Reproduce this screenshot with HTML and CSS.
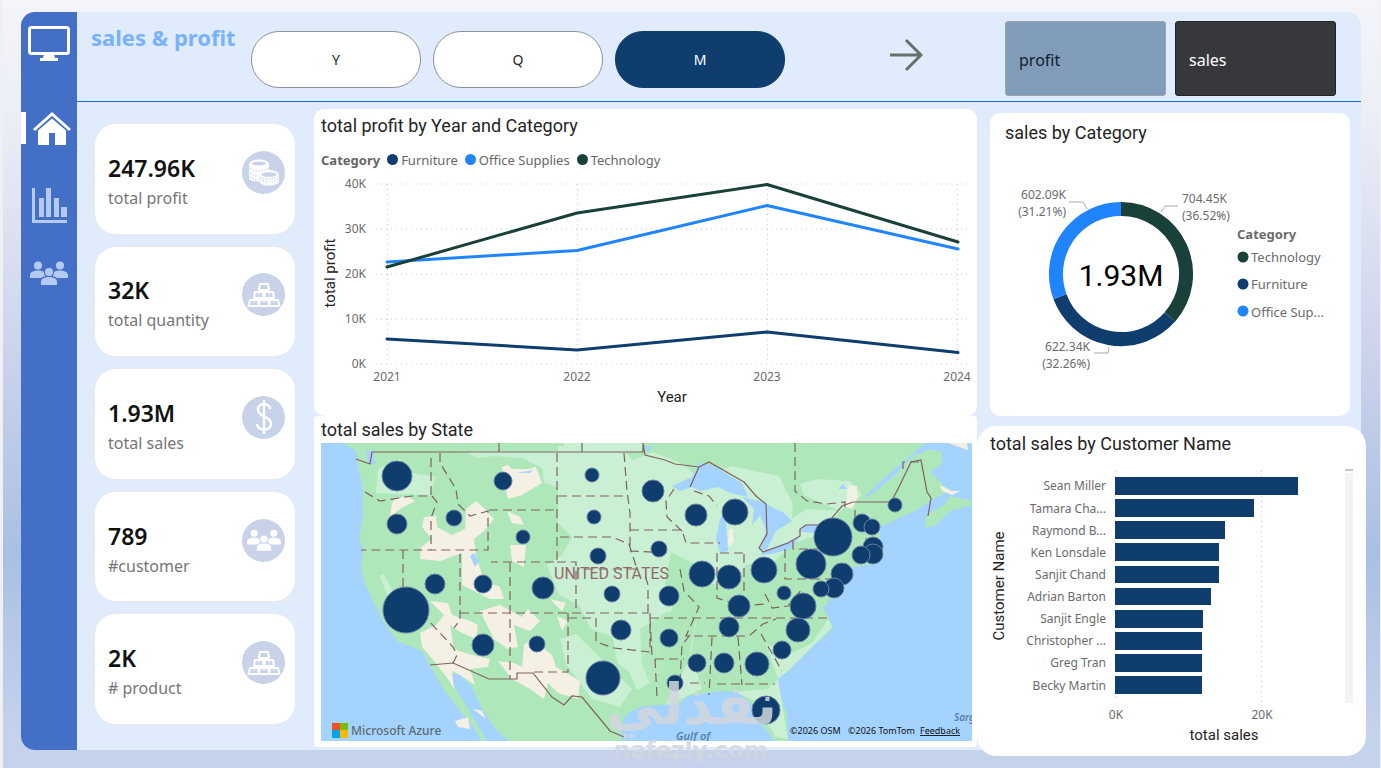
FILE: index.html
```html
<!DOCTYPE html>
<html lang="en">
<head>
    <meta charset="UTF-8">
    <meta name="viewport" content="width=device-width, initial-scale=1.0">
    <title>sales &amp; profit</title>
    <link rel="stylesheet" href="styles.css">
</head>
<body>

<!-- Shared icons -->
<svg class="sprite" aria-hidden="true">
    <symbol id="icon-people" viewBox="0 0 38 24">
        <circle cx="8" cy="4.500" r="4"/>
        <circle cx="30" cy="4.500" r="4"/>
        <circle cx="19" cy="11" r="4"/>
        <path d="M0 17v-3c0-3 4-4.500 8-4.500 2.500 0 4.500.5 6 1.500 0 2 .5 3 1.500 4-2 .5-3 1-4 2z"/>
        <path d="M38 17v-3c0-3-4-4.500-8-4.500-2.500 0-4.500.5-6 1.500 0 2-.5 3-1.500 4 2 .5 3 1 4 2z"/>
        <path d="M11 24v-3.500c0-3 4-4.500 8-4.500s8 1.500 8 4.500V24z"/>
    </symbol>
    <symbol id="icon-boxes" viewBox="0 0 34 26">
        <g fill="none" stroke="currentColor" stroke-width="2">
            <path d="M13 2h8l1 6h-10z"/>
            <path d="M8 10h8l1 6H7zM18 10h8l1 6H17z"/>
            <path d="M3 18h8l1 6H1.500zM13 18h8l1 6H12zM23 18h8l1.500 6H22z"/>
            <path d="M12 10v3M22 10v3M7 18v3M17 18v3M27 18v3" stroke-width="1"/>
        </g>
    </symbol>
    <symbol id="icon-coins" viewBox="0 0 32 27">
        <path d="M1 5c0-2.500 5-4.500 10-4.500s10 2 10 4.500v6h-2c5 0 12 1 12 5v6c0 2.500-4 4.500-10 4.500-5 0-9-1.500-10-4C4 22.500 1 21 1 19z"/>
        <ellipse cx="11" cy="4.500" rx="7" ry="2" fill="#c8d3ea"/>
        <ellipse cx="21" cy="15.500" rx="7.500" ry="2.300" fill="#c8d3ea"/>
        <path d="M2 9c4 4 14 4 18 0M2 14c2 2 5 3 9 3M2 18c3 2 5 3 9 3M12 20c4 4 14 4 18 0M12 18c4 3 14 3 18-1" fill="none" stroke="#c8d3ea" stroke-width="1.200" stroke-dasharray="1.500 1.500"/>
    </symbol>
    <symbol id="icon-dollar" viewBox="0 0 18 34">
        <path d="M15 9c0-3-2.500-5-6-5S3 6 3 9.500 6 15 9 16.500s7 3 7 7-3 6-7 6-7-2-7-5.500M9 0v34" fill="none" stroke="currentColor" stroke-width="2.400"/>
    </symbol>
</svg>

<div class="dashboard">
    <nav class="sidebar" aria-label="Pages">
        <a href="#" class="nav-link" aria-label="Screen">
            <svg width="42" height="36" viewBox="0 0 42 36"><rect x="1.500" y="1.500" width="39" height="26" rx="2" fill="none" stroke="#fff" stroke-width="3"/><path d="M16 28h10l1 4h3v3H12v-3h3z" fill="#fff"/></svg>
        </a>
        <a href="#" class="nav-link active" aria-label="Home">
            <svg width="38" height="33" viewBox="0 0 38 33"><path d="M1 18 19 2l18 16" fill="none" stroke="#fff" stroke-width="3"/><path d="M5 18.500 19 6.500l14 12V33H22V21h-6v12H5z" fill="#fff"/></svg>
        </a>
        <a href="#" class="nav-link" aria-label="Charts">
            <svg width="35" height="35" viewBox="0 0 35 35" fill="#b5caf0"><path d="M0 0h3v32h32v3H0z"/><path d="M7 10h5v19H7zM14 0h5v29h-5zM22 10h5v19h-5zM29 19h6v10h-6z"/></svg>
        </a>
        <a href="#" class="nav-link" aria-label="Customers">
            <svg width="38" height="24" class="people"><use href="#icon-people"/></svg>
        </a>
    </nav>

    <main class="main">
        <header class="header">
            <h1>sales &amp; profit</h1>
            <div class="periods">
                <button class="period">Y</button>
                <button class="period">Q</button>
                <button class="period selected">M</button>
            </div>
            <button class="arrow" aria-label="Next">
                <svg width="34" height="34" viewBox="0 0 34 34"><path d="M1 17h31M17 2l15 15-15 15" fill="none" stroke="#66706a" stroke-width="3"/></svg>
            </button>
            <div class="measures">
                <button class="measure">profit</button>
                <button class="measure selected">sales</button>
            </div>
        </header>

        <div class="content">
            <section class="kpis">
                <article class="kpi">
                    <div><strong>247.96K</strong><span>total profit</span></div>
                    <i class="badge"><svg width="32" height="27"><use href="#icon-coins"/></svg></i>
                </article>
                <article class="kpi">
                    <div><strong>32K</strong><span>total quantity</span></div>
                    <i class="badge"><svg width="34" height="26"><use href="#icon-boxes"/></svg></i>
                </article>
                <article class="kpi">
                    <div><strong>1.93M</strong><span>total sales</span></div>
                    <i class="badge"><svg width="18" height="34"><use href="#icon-dollar"/></svg></i>
                </article>
                <article class="kpi">
                    <div><strong>789</strong><span>#customer</span></div>
                    <i class="badge"><svg width="34" height="22"><use href="#icon-people"/></svg></i>
                </article>
                <article class="kpi">
                    <div><strong>2K</strong><span># product</span></div>
                    <i class="badge"><svg width="34" height="26"><use href="#icon-boxes"/></svg></i>
                </article>
            </section>

            <div class="column">
                <section class="card profit-card">
                    <h2>total profit by Year and Category</h2>
                    <ul class="legend">
                        <li class="legend-title">Category</li>
                        <li class="furniture">Furniture</li>
                        <li class="office">Office Supplies</li>
                        <li class="technology">Technology</li>
                    </ul>
                    <svg class="chart" viewBox="321 172 651 238">
                        <g class="grid">
                            <path d="M376 184h594M376 229h594M376 274h594M376 319h594M376 364h594"/>
                            <path d="M387.500 184v180M577.500 184v180M767.500 184v180M957.500 184v180"/>
                        </g>
                        <g class="line">
                            <path d="M387 339 577 350 767 332 958 352.500" stroke="#0f3d6e"/>
                            <path d="M387 262 577 250.500 767 205.500 958 249" stroke="#2184ff"/>
                            <path d="M387 267 577 213 767 184.500 958 242" stroke="#1a4139"/>
                        </g>
                        <g class="tick end">
                            <text x="366" y="188">40K</text>
                            <text x="366" y="233">30K</text>
                            <text x="366" y="278">20K</text>
                            <text x="366" y="323">10K</text>
                            <text x="366" y="368">0K</text>
                        </g>
                        <g class="tick middle">
                            <text x="387" y="381">2021</text>
                            <text x="577" y="381">2022</text>
                            <text x="767" y="381">2023</text>
                            <text x="957" y="381">2024</text>
                        </g>
                        <text class="axis" x="672" y="402">Year</text>
                        <text class="axis" transform="translate(335 273) rotate(-90)">total profit</text>
                    </svg>
                </section>

                <section class="card map-card">
                    <h2>total sales by State</h2>
                    <svg class="chart" viewBox="321 444 651 298">
                        <rect x="321" y="444" width="651" height="298" fill="#a5d3ff"/>
                        <!-- land -->
                        <path fill="#aee7ba" d="M343 444 357 453 358 468 363 490 363 518 359 538 363 553 361 568 365 585 373 602 383 622 398 643 410 647 423 653 430 667 442 688 457 708 472 725 482 743 486 740 477 725 467 708 453 685 452 675 460 675 472 688 482 710 497 732 510 743H623L620 727 627 715 640 708 657 706 680 705 687 697 720 692 737 693 750 703 760 723 775 743H788L787 715 777 688 778 678 787 670 807 650 825 638 833 628 828 618 823 608 837 598 845 582 853 568 873 565 885 555 880 542 880 528 897 520 915 512 933 500 948 493 938 480 930 473 942 465 942 453 930 450 913 457 896 475 872 495 862 500 885 478 907 460 925 444z"/>
                        <path fill="#aee7ba" d="M972 502 950 497 945 505 926 516 925 529 936 526 950 512 972 506z"/>
                        <!-- light plains -->
                        <g fill="#c9f0d3">
                            <path d="M454 454H640l4-10h-80v8h-90zM468 454h90v70l14 14-10 18-15 10 12 30 20 10 12 24 22 8 4 25 12 10 8 18 15-8 12-16-5-28 14-32-8-22 6-32 24 12 14 20 22 0 16-20h24l18-16 4-44-14-28-48-10-10 4-14 16-24-22-30-12-20 8-14-14H558v42l-14-6-2-14-20-10-28-2-16 2z"/>
                            <path d="M378 470 400 460 412 474 436 478 430 496 376 494z"/>
                            <path d="M738 498 756 505 762 530 758 552 724 552 726 520zM764 548 788 522 806 510 840 512 822 535 790 545z"/>
                            <path d="M800 485 816 480 850 482 862 496 840 512 804 496zM665 706 690 660 698 612 690 652 702 690 672 704zM735 693 768 690 778 680 766 645 790 655 812 644 828 620 832 628 808 652 788 672 778 680 782 705 788 740 776 738 765 720 755 702z"/>
                            <path d="M380 577 384 575 402 610 396 620zM576 635 560 640 566 665 592 700 620 708 632 690z"/>
                        </g>
                        <path fill="#aee7ba" d="M640 630 668 612 690 622 686 650 670 680 652 690 642 665z" opacity=".8"/>
                        <!-- desert and mountains -->
                        <g fill="#f5f0e4">
                            <path d="M395 500 407 497 415 502 400 510 390 518 392 504zM424 518 436 517 437 528 452 536 465 530 466 510 476 502 485 510 494 520 484 532 474 540 476 556 484 582 500 588 504 600 490 600 474 592 462 586 462 554 440 562 420 560 421 548 432 540 422 528z"/>
                            <path d="M430 602 448 604 452 616 470 622 478 626 476 640 462 634 450 626 454 650 468 655 490 660 488 668 470 670 475 686 460 676 452 672 454 690 448 680 434 662 422 648 420 634 436 626 444 616z"/>
                            <path d="M480 612 500 606 522 618 528 610 540 622 530 632 514 626 518 648 508 650 494 640z"/>
                            <path d="M498 662 514 664 522 668 524 646 532 640 552 656 556 668 580 682 578 700 558 694 548 684 544 700 530 690 512 680zM504 484 502 468 508 466 512 470 528 470 536 468 542 484 522 496 508 500zM507 512 520 518 524 526 512 524zM510 546 526 546 524 568 512 562zM550 600 566 604 562 612zM557 617 568 622 562 632zM473 710 486 720 482 712zM455 722 468 718 470 730 458 728zM848 486 857 487 857 500 852 510 846 508zM729 530 733 530 734 542 730 548 728 544zM948 444 967 444 968 451z"/>
                            <path d="M940 486 952 492 960 492 952 496 942 492z"/>
                        </g>
                        <!-- lakes -->
                        <g fill="#a5d3ff">
                            <path d="M672 487 692 478 700 464 712 466 742 484 748 498 730 494 718 488 700 492 692 488 680 492zM720 520 726 512 732 505 740 500 732 508 726 524 728 552 720 554 716 540z"/>
                            <path d="M742 498 760 502 784 514 792 522 776 532 766 552 760 550 766 532 760 516 752 526 754 510zM759 556 766 551 782 545 800 538 790 550 772 555zM798 532 804 526 830 524 830 530 812 534zM470 557 474 554 479 562 475 568zM366 452 372 452 376 466 368 464zM644 446 652 448 648 454zM516 474 534 471 530 474zM838 490 843 485 847 490z"/>
                            <path d="M828 598 832 604 832 612 828 606z"/>
                        </g>
                        <!-- borders -->
                        <g fill="none" stroke="#80605f" stroke-width="1.200">
                            <path d="M356 460 370 465 372 453H643V444l2 12 20 5 10 4 24 3 10-5 35 20 12 14 10 8 1 30-8 14 4 4 25-9 12-7 0-7 6-4h20l16-19 11-4h38l6-11 14-29 10-2 6 32 4 6-3 18"/>
                            <path d="M430 666 453 664 489 680H517v-6h16l19 24 12 8 8-9 10 1 28 34 14 6M699 468 690 488M855 511v18M865 540h12"/>
                            <g stroke-dasharray="9 5">
                                <path d="M365 493 380 502 412 497h19V454M440 454v10l16 26 2 15 12 12 18-5v39H361M432 497l5 6-6 16v32M403 551v43l50 54 4 8-4 8M489 511h68M557 454v109H491M460 555v66l-6 8M510 564v116M460 614H648M557 563h19v50M558 497h70M560 538h52l17 7 8 25h-60M499 444v9M582 444v9M624 454l3 38 3 22v38l38 2"/>
                                <path d="M568 614v59H533M568 619h28v24l18 6 36 4V614M648 614v-28l-4-13M650 619h178M650 619l2 38M655 660h29M690 636l-8 10-2 36M630 531h52l4 13h34M674 490l-8 12 1 16 15 14M720 554h25M717 554v45l24 8 24-2M744 555v37M680 570l4 22 15 16-13 29h63l14-12 13-5M712 638l-3 58M738 638l4 48M717 685h58M761 635l21 37M785 550v30h52M793 542v8h40"/>
                                <path d="M765 595l7 14 16-2 14-17M795 444v48l12 10 20 3 18-2v10M655 660l2 38M690 684h15M694 492l15 5 8 10M903 470v-7h17"/>
                            </g>
                        </g>
                        <text class="country" x="554" y="580">UNITED STATES</text>
                        <text class="sea" x="676" y="741">Gulf of</text>
                        <text class="sea small" x="954" y="722">Sarg</text>
                        <!-- sales by state -->
                        <g class="bubbles">
                            <circle cx="397" cy="477" r="15"/><circle cx="397" cy="525" r="10"/><circle cx="454" cy="519" r="8"/><circle cx="503" cy="482" r="9"/><circle cx="592" cy="476" r="7"/><circle cx="594" cy="518" r="7"/><circle cx="598" cy="557" r="8"/><circle cx="523" cy="538" r="7"/><circle cx="435" cy="585" r="10"/><circle cx="483" cy="585" r="9"/><circle cx="406" cy="611" r="23"/><circle cx="543" cy="589" r="11"/><circle cx="612" cy="595" r="8"/><circle cx="483" cy="646" r="11"/><circle cx="537" cy="645" r="8"/><circle cx="621" cy="631" r="10"/><circle cx="603" cy="679" r="17"/>
                            <circle cx="653" cy="492" r="11"/><circle cx="696" cy="516" r="11"/><circle cx="735" cy="513" r="13"/><circle cx="659" cy="550" r="8"/><circle cx="702" cy="575" r="13"/><circle cx="729" cy="578" r="12"/><circle cx="764" cy="571" r="13"/><circle cx="784" cy="594" r="7"/><circle cx="669" cy="597" r="10"/><circle cx="739" cy="607" r="11"/><circle cx="729" cy="628" r="10"/><circle cx="803" cy="607" r="13"/><circle cx="798" cy="631" r="12"/><circle cx="782" cy="651" r="9"/><circle cx="757" cy="665" r="12"/><circle cx="724" cy="664" r="10"/><circle cx="697" cy="664" r="9"/><circle cx="669" cy="639" r="9"/><circle cx="675" cy="684" r="8"/><circle cx="766" cy="711" r="14"/>
                            <circle cx="833" cy="538" r="19"/><circle cx="811" cy="565" r="15"/><circle cx="842" cy="575" r="11"/><circle cx="834" cy="589" r="10"/><circle cx="821" cy="590" r="8"/><circle cx="862" cy="524" r="9"/><circle cx="872" cy="528" r="8"/><circle cx="873" cy="548" r="10"/><circle cx="873" cy="555" r="10"/><circle cx="861" cy="556" r="9"/><circle cx="895" cy="506" r="7"/>
                        </g>
                        <rect x="332" y="724" width="8" height="7" fill="#f25022"/><rect x="340" y="724" width="8" height="7" fill="#7fba00"/><rect x="332" y="731" width="8" height="8" fill="#00a4ef"/><rect x="340" y="731" width="8" height="8" fill="#ffb900"/>
                        <text class="azure" x="351" y="736">Microsoft Azure</text>
                        <text class="copyright" x="790" y="735">©2026 OSM</text>
                        <text class="copyright" x="848" y="735">©2026 TomTom</text>
                        <a href="#"><text class="copyright link" x="920" y="735">Feedback</text></a>
                    </svg>
                    <div class="watermark"><span lang="ar">نفذلي</span><span>nafezly.com</span></div>
                </section>
            </div>

            <div class="column side">
                <section class="card donut-card">
                    <h2>sales by Category</h2>
                    <svg class="chart" viewBox="990 146 360 246">
                        <g fill="none" stroke-width="14">
                            <path stroke="#1a4139" d="M1121 209A65 65 0 0 1 1169.800 317"/>
                            <path stroke="#0f3d6e" d="M1169.800 317A65 65 0 0 1 1060 296.600"/>
                            <path stroke="#2184ff" d="M1060 296.600A65 65 0 0 1 1121 209"/>
                        </g>
                        <path d="M1069 202h14l4 7M1178 206h-13l-4 6M1094 353h14l1-6" fill="none" stroke="#aaa"/>
                        <text class="total" x="1121" y="286">1.93M</text>
                        <g class="tick end">
                            <text x="1066" y="199">602.09K</text>
                            <text x="1066" y="216">(31.21%)</text>
                            <text x="1090" y="351">622.34K</text>
                            <text x="1090" y="368">(32.26%)</text>
                        </g>
                        <g class="tick">
                            <text x="1182" y="203">704.45K</text>
                            <text x="1182" y="220">(36.52%)</text>
                        </g>
                        <circle cx="1243" cy="257" r="5.500" fill="#1a4139"/>
                        <circle cx="1243" cy="284" r="5.500" fill="#0f3d6e"/>
                        <circle cx="1243" cy="311" r="5.500" fill="#2184ff"/>
                        <g class="key">
                            <text class="key-title" x="1237" y="239">Category</text>
                            <text x="1251" y="262">Technology</text>
                            <text x="1251" y="289">Furniture</text>
                            <text x="1251" y="317">Office Sup...</text>
                        </g>
                    </svg>
                </section>

                <section class="card customer-card">
                    <h2>total sales by Customer Name</h2>
                    <svg class="chart" viewBox="977 458 389 292">
                        <path class="grid" d="M1115.500 472v228M1261.500 472v232"/>
                        <g fill="#0f3d6e">
                            <rect x="1115" y="478" width="183" height="18"/>
                            <rect x="1115" y="500" width="139" height="18"/>
                            <rect x="1115" y="522" width="110" height="18"/>
                            <rect x="1115" y="544" width="104" height="18"/>
                            <rect x="1115" y="567" width="104" height="17"/>
                            <rect x="1115" y="589" width="96" height="17"/>
                            <rect x="1115" y="611" width="88" height="18"/>
                            <rect x="1115" y="633" width="87" height="18"/>
                            <rect x="1115" y="655" width="87" height="18"/>
                            <rect x="1115" y="677" width="87" height="18"/>
                        </g>
                        <g class="tick end">
                            <text x="1106" y="491">Sean Miller</text>
                            <text x="1106" y="514">Tamara Cha...</text>
                            <text x="1106" y="536">Raymond B...</text>
                            <text x="1106" y="558">Ken Lonsdale</text>
                            <text x="1106" y="580">Sanjit Chand</text>
                            <text x="1106" y="602">Adrian Barton</text>
                            <text x="1106" y="624">Sanjit Engle</text>
                            <text x="1106" y="646">Christopher ...</text>
                            <text x="1106" y="668">Greg Tran</text>
                            <text x="1106" y="691">Becky Martin</text>
                        </g>
                        <g class="tick middle">
                            <text x="1116" y="720">0K</text>
                            <text x="1262" y="720">20K</text>
                        </g>
                        <text class="axis" x="1224" y="741">total sales</text>
                        <text class="axis" transform="translate(1004 587) rotate(-90)">Customer Name</text>
                        <rect x="1345" y="474" width="8" height="230" fill="#f3f3f3"/>
                        <rect x="1345" y="470" width="8" height="2" fill="#c4c4c4"/>
                    </svg>
                </section>
            </div>
        </div>
    </main>
</div>

</body>
</html>
```
FILE: styles.css
```css
* {
    box-sizing: border-box;
}
body {
    margin: 0;
    min-height: 100vh;
    padding: 12px 19px 18px 18px;
    display: flex;
    border: solid #f0f0f4;
    border-width: 0 1px 0 3px;
    font-family: "Noto Sans", "Open Sans", sans-serif;
    color: #252423;
    background: linear-gradient(#f4f5fa 0, #eceef7 15%, #cdd4ec 45%, #a9c0e2 72%, #c5d2ec 96%);
}
h1, h2, ul {
    margin: 0;
    padding: 0;
}
button {
    font: inherit;
    cursor: pointer;
}
.sprite {
    position: absolute;
    width: 0;
    height: 0;
}

/* Layout */
.dashboard {
    flex: 1;
    display: flex;
    border-radius: 14px;
    background: #e0ecfc;
}
.sidebar {
    width: 56px;
    padding-top: 14px;
    display: flex;
    flex-direction: column;
    background: #4370c6;
    border-radius: 14px 0 0 14px;
}
.nav-link {
    height: 36px;
    margin-bottom: 50px;
    display: flex;
    align-items: center;
    justify-content: center;
}
.nav-link.active {
    height: 32px;
    margin-bottom: 43px;
    border-left: 5px solid #fff;
}
.nav-link:nth-child(3) {
    margin-bottom: 32px;
}
.nav-link svg {
    display: block;
}
.people {
    fill: #b5caf0;
}
.main {
    flex: 1;
    min-width: 0;
    display: flex;
    flex-direction: column;
}

/* Header */
.header {
    display: flex;
    align-items: center;
    height: 90px;
    padding: 4px 25px 0 14px;
    border-bottom: 1px solid #1473d0;
}
.header h1 {
    width: 160px;
    align-self: flex-start;
    margin-top: 5px;
    font-size: 22px;
    line-height: 32px;
    color: #78b2ff;
    white-space: nowrap;
}
.periods {
    display: flex;
    gap: 12px;
    padding-top: 2px;
}
.period {
    width: 170px;
    height: 57px;
    border: 1px solid #8b9099;
    border-radius: 28px;
    background: #fff;
    color: #252423;
    font-size: 14px;
}
.period.selected {
    background: #0f3d6e;
    border-color: #0f3d6e;
    color: #fff;
}
.arrow {
    margin: 0 0 8px 104px;
    padding: 0;
    border: 0;
    background: none;
}
.arrow svg {
    display: block;
}
.measures {
    display: flex;
    gap: 9px;
    margin-left: auto;
}
.measure {
    width: 161px;
    height: 75px;
    padding: 2px 13px 0;
    border: 1px solid #9aa5b0;
    border-radius: 3px;
    background: #819cb9;
    color: #16202c;
    font-size: 16px;
    text-align: left;
}
.measure.selected {
    background: #37383b;
    border-color: #222326;
    color: #fff;
}

/* Content */
.content {
    flex: 1;
    display: grid;
    grid-template-columns: 207px minmax(0, 663fr) minmax(0, 360fr);
    column-gap: 13px;
    padding: 7px 11px 0 17px;
}
.kpis {
    display: flex;
    flex-direction: column;
    gap: 11px;
    padding: 14px 5px 25px 0;
}
.kpi {
    flex: 1;
    display: flex;
    align-items: center;
    justify-content: space-between;
    padding: 0 10px 0 13px;
    border: 1px solid #e9e8ea;
    border-radius: 22px;
    background: #fff;
}
.kpi strong {
    display: block;
    margin-top: 6px;
    font-size: 23px;
    font-weight: 600;
    line-height: 32px;
    color: #111;
}
.kpi span {
    font-size: 16px;
    line-height: 28px;
    color: #767676;
}
.badge {
    width: 43px;
    height: 43px;
    margin-bottom: 13px;
    display: flex;
    align-items: center;
    justify-content: center;
    border-radius: 50%;
    background: #c8d3ea;
    color: #fff;
}
.badge svg {
    fill: currentColor;
}

/* Cards */
.column {
    display: flex;
    flex-direction: column;
}
.column.side {
    padding-top: 4px;
    gap: 10px;
}
.card {
    background: #fff;
    border-radius: 10px;
}
.card h2 {
    font-family: Roboto, sans-serif;
    font-size: 18px;
    font-weight: 400;
    line-height: 26px;
    white-space: nowrap;
}
.chart {
    display: block;
    width: 100%;
    height: auto;
}
.profit-card {
    padding: 4px 5px 6px 7px;
}
.map-card {
    position: relative;
    padding: 1px 5px 6px 7px;
    border-radius: 4px;
}
.donut-card {
    padding: 7px 0 24px;
}
.donut-card h2 {
    padding-left: 15px;
}
.customer-card {
    margin: 0 -16px -7px -13px;
    padding: 5px 0 7px;
    border-radius: 20px;
    position: relative;
}
.customer-card h2 {
    padding-left: 13px;
}
.legend {
    display: flex;
    gap: 7px;
    height: 33px;
    padding-top: 8px;
    align-items: center;
    list-style: none;
    font-size: 13px;
    color: #666;
}
.legend li {
    display: flex;
    align-items: center;
    gap: 3px;
}
.legend-title {
    font-weight: 700;
}
.legend li:not(.legend-title)::before {
    content: "";
    width: 11px;
    height: 11px;
    border-radius: 50%;
    background: #0f3d6e;
}
.legend li.office::before {
    background: #2184ff;
}
.legend li.technology::before {
    background: #1a4139;
}

/* Chart drawing */
.grid {
    fill: none;
    stroke: #c8c8c8;
    stroke-dasharray: 1 4;
}
.line {
    fill: none;
    stroke-width: 3;
    stroke-linecap: round;
    stroke-linejoin: round;
}
.tick {
    font-size: 12px;
    fill: #6b6b6b;
}
.end {
    text-anchor: end;
}
.middle {
    text-anchor: middle;
}
.axis {
    font-family: Roboto, sans-serif;
    font-size: 15px;
    fill: #252423;
    text-anchor: middle;
}
.total {
    font-family: Roboto, sans-serif;
    font-size: 30px;
    text-anchor: middle;
}
.key {
    font-size: 13px;
    fill: #6b6b6b;
}
.key-title {
    font-weight: 700;
}

/* Map */
.bubbles {
    fill: #0f3d6e;
    stroke: #6a7fa5;
    stroke-width: 1;
}
.country {
    font-family: Roboto, sans-serif;
    font-size: 16px;
    fill: #93686c;
}
.sea {
    font-size: 11px;
    font-style: italic;
    font-weight: 600;
    fill: #5580ad;
}
.small {
    font-size: 10px;
}
.azure {
    font-size: 12px;
    font-weight: 500;
    fill: #5d6b70;
}
.copyright {
    font-size: 9px;
    fill: #111;
}
.link {
    text-decoration: underline;
}
.watermark {
    position: absolute;
    left: 44%;
    bottom: -18px;
    width: 170px;
    display: flex;
    flex-direction: column;
    text-align: center;
    font-family: "DejaVu Sans", sans-serif;
    font-size: 23px;
    font-weight: 700;
    line-height: 30px;
    color: #d3d7de;
    opacity: .85;
    pointer-events: none;
}
.watermark span:first-child {
    font-size: 56px;
    line-height: 60px;
}
```
